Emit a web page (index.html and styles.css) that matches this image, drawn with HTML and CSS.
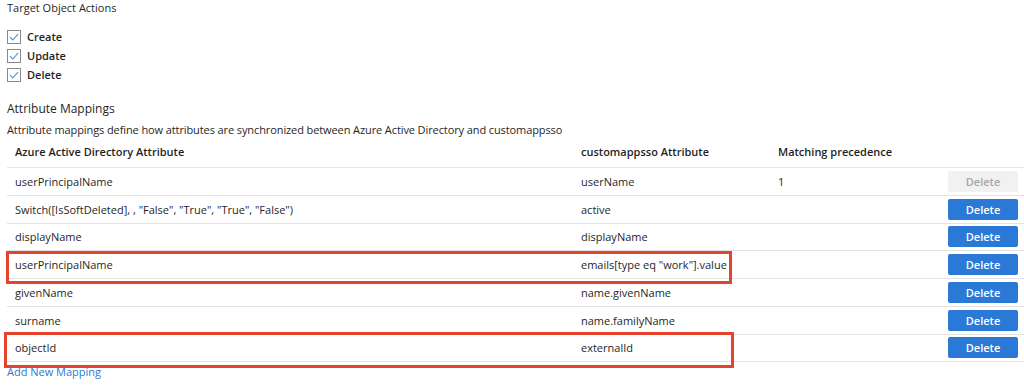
FILE: index.html
```html
<!DOCTYPE html>
<html>
<head>
<meta charset="utf-8">
<link rel="stylesheet" href="styles.css">
</head>
<body>
<div class="page">
  <div class="section-title">Target Object Actions</div>
  <div class="checks">
    <label class="check"><span class="box"><svg viewBox="0 0 14 14" width="14" height="14"><path d="M3 7.2 L5.8 10 L11 4.2" fill="none" stroke="#4a8fe0" stroke-width="1.1"/></svg></span>Create</label>
    <label class="check"><span class="box"><svg viewBox="0 0 14 14" width="14" height="14"><path d="M3 7.2 L5.8 10 L11 4.2" fill="none" stroke="#4a8fe0" stroke-width="1.1"/></svg></span>Update</label>
    <label class="check"><span class="box"><svg viewBox="0 0 14 14" width="14" height="14"><path d="M3 7.2 L5.8 10 L11 4.2" fill="none" stroke="#4a8fe0" stroke-width="1.1"/></svg></span>Delete</label>
  </div>
  <div class="heading">Attribute Mappings</div>
  <div class="desc">Attribute mappings define how attributes are synchronized between Azure Active Directory and customappsso</div>
  <div class="table">
    <div class="row head">
      <div class="c1">Azure Active Directory Attribute</div>
      <div class="c2">customappsso Attribute</div>
      <div class="c3">Matching precedence</div>
      <div class="c4"></div>
    </div>
    <div class="row">
      <div class="c1">userPrincipalName</div>
      <div class="c2">userName</div>
      <div class="c3">1</div>
      <div class="c4"><button class="btn disabled">Delete</button></div>
    </div>
    <div class="row">
      <div class="c1">Switch([IsSoftDeleted], , "False", "True", "True", "False")</div>
      <div class="c2">active</div>
      <div class="c3"></div>
      <div class="c4"><button class="btn">Delete</button></div>
    </div>
    <div class="row">
      <div class="c1">displayName</div>
      <div class="c2">displayName</div>
      <div class="c3"></div>
      <div class="c4"><button class="btn">Delete</button></div>
    </div>
    <div class="row">
      <div class="c1">userPrincipalName</div>
      <div class="c2">emails[type eq "work"].value</div>
      <div class="c3"></div>
      <div class="c4"><button class="btn">Delete</button></div>
      <div class="highlight hl-a"></div>
    </div>
    <div class="row">
      <div class="c1">givenName</div>
      <div class="c2">name.givenName</div>
      <div class="c3"></div>
      <div class="c4"><button class="btn">Delete</button></div>
    </div>
    <div class="row">
      <div class="c1">surname</div>
      <div class="c2">name.familyName</div>
      <div class="c3"></div>
      <div class="c4"><button class="btn">Delete</button></div>
    </div>
    <div class="row">
      <div class="c1">objectId</div>
      <div class="c2">externalId</div>
      <div class="c3"></div>
      <div class="c4"><button class="btn">Delete</button></div>
      <div class="highlight hl-b"></div>
    </div>
  </div>
  <a class="add" href="#">Add New Mapping</a>
</div>
</body>
</html>
```

FILE: styles.css
```css
* { box-sizing: border-box; }
html, body { margin: 0; padding: 0; background: #fff; }
body {
  font-family: "Open Sans", "Liberation Sans", sans-serif;
  font-size: 11px;
  color: #1f1f1f;
  width: 1024px;
  height: 385px;
  overflow: hidden;
}
.page { padding-left: 7px; }
.section-title { height: 15px; line-height: 15px; }
.checks { margin-top: 15px; display: flex; flex-direction: column; gap: 5px; }
.check {
  display: flex; align-items: center; gap: 6px;
  font-weight: 600; height: 14px; line-height: 14px;
}
.box {
  width: 14px; height: 14px; border: 1px solid #8a8a8a;
  display: flex; align-items: center; justify-content: center;
  background: #fff;
}
.box svg { display: block; margin: -1px; }
.heading { font-size: 12px; margin-top: 18px; height: 17px; line-height: 17px; }
.desc { margin-top: 5px; height: 15px; line-height: 15px; }
.desc { letter-spacing: -0.1px; }
.table { margin-top: 7px; }
.row {
  position: relative;
  display: grid;
  grid-template-columns: 574px 197px 1fr 76px;
  align-items: center;
  height: 27.75px;
  border-bottom: 1px solid #e2e2e2;
}
.row.head { font-weight: 600; height: 24px; align-items: start; border-bottom: 1px solid #e6e6e6; }
.c1 { padding-left: 8px; white-space: nowrap; }
.c2, .c3 { white-space: nowrap; }
.c4 { display: flex; justify-content: flex-start; }
.btn {
  width: 70px; height: 21px; border: none; border-radius: 2px;
  background: #2b79d6; color: #fff;
  font-family: "Open Sans", "Liberation Sans", sans-serif;
  font-size: 11px; font-weight: 600; padding: 0; cursor: pointer;
}
.btn.disabled { background: #f1f1f1; color: #a6a6a6; }
.highlight {
  position: absolute;
  border: 3px solid #e6432c;
  pointer-events: none;
}
.hl-a { left: -1px; top: 0; width: 726px; height: 33px; }
.hl-b { left: -3px; top: -3px; width: 730px; height: 36px; }
.add {
  display: block; margin-top: 2px; color: #2b79d6; text-decoration: none;
  height: 15px; line-height: 15px;
}
```
